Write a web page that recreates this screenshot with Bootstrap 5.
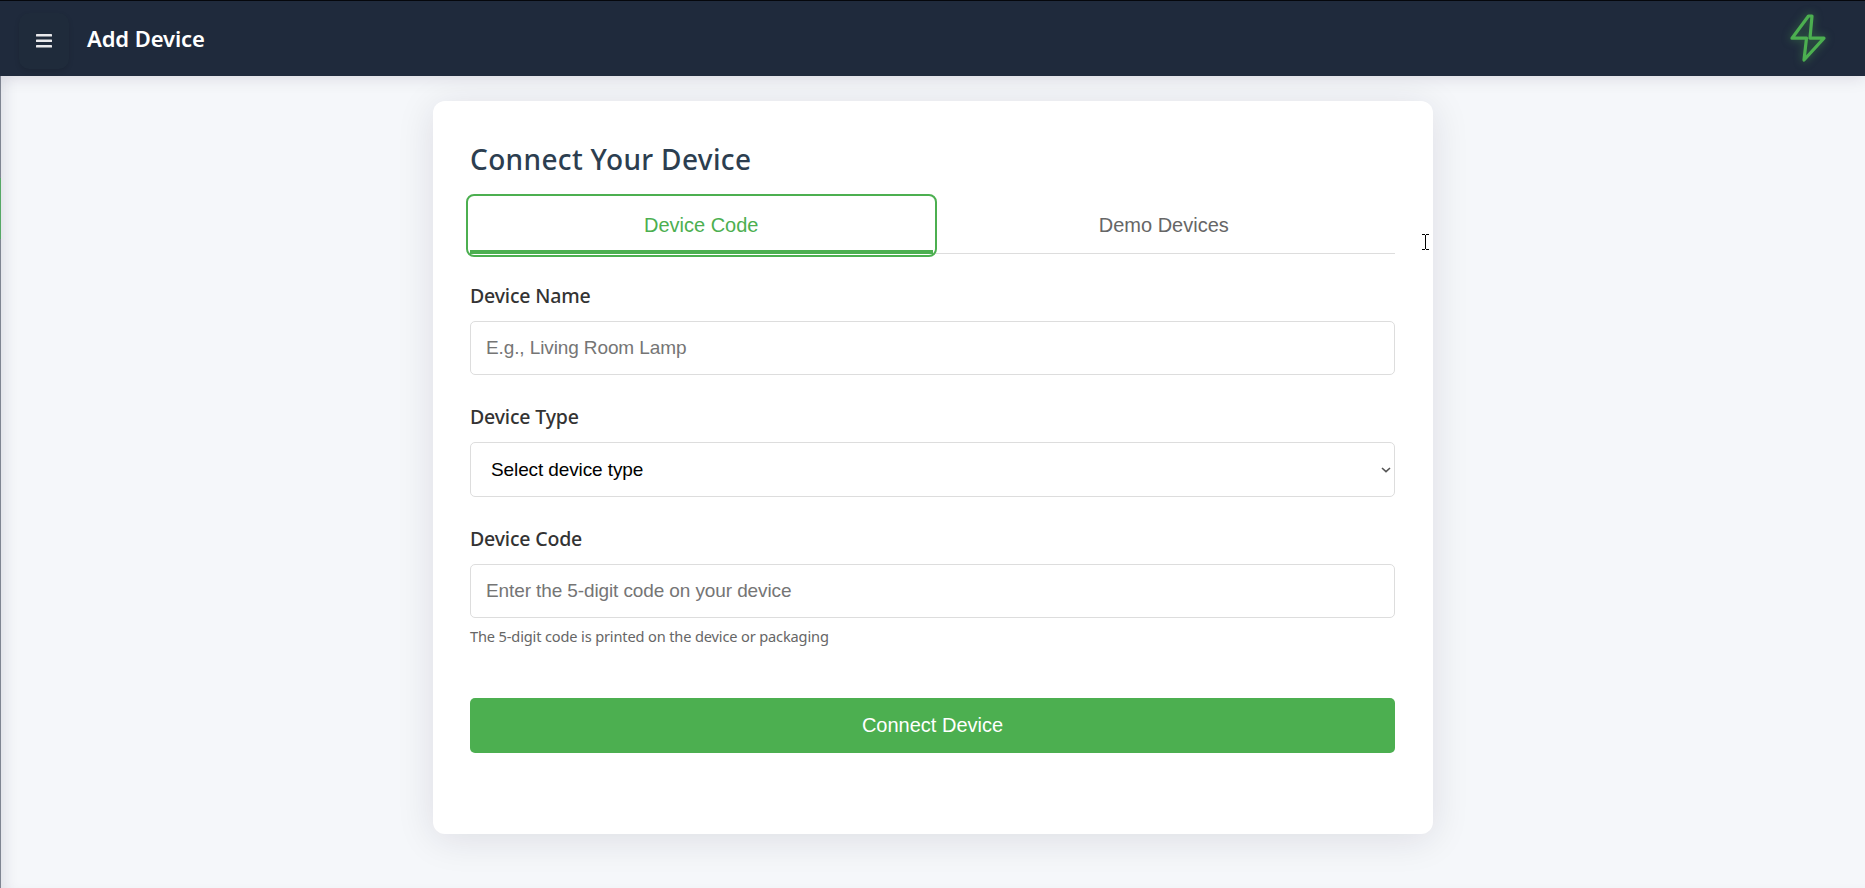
<!DOCTYPE html>
<html lang="en">
<head>
<meta charset="utf-8">
<meta name="viewport" content="width=device-width, initial-scale=1">
<title>Add Device</title>
<link href="https://cdn.jsdelivr.net/npm/bootstrap@5.3.0/dist/css/bootstrap.min.css" rel="stylesheet">
<style>
body{background:#f5f7fa;font-family:"Noto Sans","Open Sans",sans-serif;height:888px;overflow:hidden;color:#333}
.topbar{height:76px;background:#1f2a3c;border-top:1px solid #05070c;box-shadow:0 2px 16px rgba(30,20,60,.12);position:relative;z-index:2}
.menu-btn{width:50px;height:56px;margin:4px 0 0 19px;border-radius:10px;background:#1f2b3b;box-shadow:0 2px 5px rgba(0,0,0,.12);border:0;padding:0}
.page-title{font-size:22px;font-weight:600;line-height:30px;color:#fff;margin:0 0 2px 18px;letter-spacing:-.1px}
.bolt{margin:0 32px 2px 0;filter:drop-shadow(0 0 4px rgba(76,175,80,.5))}
.page-body{height:812px;border-left:1px solid #7f8592;box-shadow:inset 12px 0 14px -8px rgba(30,20,60,.1);position:relative}
.edge-accent{position:absolute;left:-1px;top:102px;width:1px;height:61px;background:#56a866}
.panel{width:1000px;height:733px;margin:25px 0 0 432px;padding:0 38px 0 37px;border-radius:12px;background:#fff;box-shadow:0 5px 38px rgba(30,20,50,.11)}
.panel h2{font-size:28px;font-weight:500;line-height:40px;color:#2c3e50;margin:0;padding-top:38px;letter-spacing:.35px}
.tab-row{margin-top:19px;height:56px;border-bottom:1px solid #ddd}
.tab-row button{font:20px/54px "Liberation Sans",Arial,sans-serif;border:0;background:none;padding:0 0 2px;height:56px;color:#666}
.tab-row .current{color:#4caf50;box-shadow:inset 0 -4px #4caf50;position:relative}
.tab-row .current::after{content:"";position:absolute;inset:-4px -4px -3px;border:2px solid #4caf50;border-radius:8px}
.field-label{font-size:19.5px;font-weight:500;line-height:28px;color:#333;display:block;margin:28px 0 11px;letter-spacing:-.17px}
.field-box{height:54px;width:100%;border:1px solid #ddd;border-radius:5px;padding:0 15px;font:19px/52px "Liberation Sans",Arial,sans-serif;letter-spacing:-.11px;color:#000;background:#fff;display:block}
.field-box::placeholder{color:#757575}
.pick-box{height:55px;padding:0 3px 0 20px}
.hint{font-size:14.6px;line-height:20px;color:#666;margin:8px 0 52px;letter-spacing:-.15px}
.go-btn{height:55px;border-radius:5px;border:0;background:#4caf50;color:#fff;font:20px/53px "Liberation Sans",Arial,sans-serif}
.pointer-mark{position:absolute;left:1421px;top:158px}
</style>
</head>
<body>
<header class="topbar d-flex align-items-center">
<button class="menu-btn d-flex align-items-center justify-content-center" aria-label="Menu"><svg width="16" height="14" viewBox="0 0 16 14" fill="#e9e9ec"><rect y="0" width="16" height="2.500" rx=".6"/><rect y="5.500" width="16" height="2.500" rx=".6"/><rect y="11" width="16" height="2.500" rx=".6"/></svg></button>
<h1 class="page-title">Add Device</h1>
<svg class="bolt ms-auto" width="48" height="52" viewBox="1785 12 48 52" fill="none" stroke="#4caf50" stroke-width="3.200" stroke-linejoin="round"><path d="M1808.500 16H1812L1810 38.200H1824L1804 60L1806.500 38.200H1792Z"/></svg>
</header>
<main class="page-body d-flex align-items-start">
<span class="edge-accent"></span>
<section class="panel">
<h2>Connect Your Device</h2>
<div class="tab-row d-flex"><button class="current w-50">Device Code</button><button class="w-50">Demo Devices</button></div>
<label class="field-label" for="deviceName">Device Name</label>
<input class="field-box" id="deviceName" placeholder="E.g., Living Room Lamp">
<label class="field-label">Device Type</label>
<div class="field-box pick-box d-flex align-items-center justify-content-between" role="combobox"><span>Select device type</span><svg width="10" height="6" viewBox="0 0 10 6" fill="none" stroke="#555" stroke-width="1.600"><path d="M1 1L5 4.600L9 1"/></svg></div>
<label class="field-label" for="deviceCode">Device Code</label>
<input class="field-box" id="deviceCode" placeholder="Enter the 5-digit code on your device">
<div class="hint">The 5-digit code is printed on the device or packaging</div>
<button class="go-btn w-100">Connect Device</button>
</section>
<svg class="pointer-mark" width="7" height="16" viewBox="0 0 7 16" fill="none" stroke="#000" shape-rendering="crispEdges"><path d="M0 .5H3M4 .5H7M3.500 1V15M0 15.500H3M4 15.500H7"/></svg>
</main>
<script src="https://cdn.jsdelivr.net/npm/bootstrap@5.3.0/dist/js/bootstrap.bundle.min.js"></script>
</body>
</html>
